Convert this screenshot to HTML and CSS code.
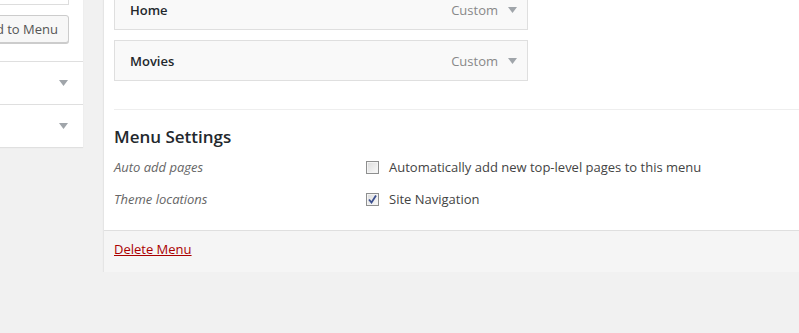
FILE: index.html
```html
<!DOCTYPE html>
<html>
<head>
  <title>Menus</title>
  <meta charset="UTF-8">
  <link rel="stylesheet" href="styles.css">
</head>
<body>
  <div class="nav-menus">
    <div class="menu-sidebar">
      <div class="add-section">
        <input type="text" class="search-field" value="">
        <div class="button-row">
          <button type="button" class="add-button">Add to Menu</button>
        </div>
      </div>
      <div class="accordion-row">
        <span class="accordion-title">Categories</span>
        <svg class="arrow" width="9" height="6" viewBox="0 0 9 6"><path d="M0 0h9L4.5 6z"/></svg>
      </div>
      <div class="accordion-row">
        <span class="accordion-title">Tags</span>
        <svg class="arrow" width="9" height="6" viewBox="0 0 9 6"><path d="M0 0h9L4.5 6z"/></svg>
      </div>
    </div>

    <div class="menu-edit">
      <div class="menu-body">
        <ul class="menu-items">
          <li class="menu-item">
            <span class="item-title">Home</span>
            <span class="item-type">Custom</span>
            <svg class="arrow" width="9" height="6" viewBox="0 0 9 6"><path d="M0 0h9L4.5 6z"/></svg>
          </li>
          <li class="menu-item">
            <span class="item-title">Movies</span>
            <span class="item-type">Custom</span>
            <svg class="arrow" width="9" height="6" viewBox="0 0 9 6"><path d="M0 0h9L4.5 6z"/></svg>
          </li>
        </ul>

        <div class="menu-settings">
          <h3>Menu Settings</h3>
          <div class="setting-row">
            <span class="setting-name">Auto add pages</span>
            <label class="setting-input">
              <span class="checkbox"></span>
              Automatically add new top-level pages to this menu
            </label>
          </div>
          <div class="setting-row">
            <span class="setting-name">Theme locations</span>
            <label class="setting-input">
              <span class="checkbox checked">
                <svg width="9" height="9" viewBox="0 0 9 9"><path d="M1 4.5l2.5 3L8 0.5" fill="none" stroke="#3b4f8f" stroke-width="1.8"/></svg>
              </span>
              Site Navigation
            </label>
          </div>
        </div>
      </div>

      <div class="menu-footer">
        <a href="#" class="delete-link">Delete Menu</a>
      </div>
    </div>
  </div>
</body>
</html>
```

FILE: styles.css
```css
body {
  margin: 0;
  background-color: #f1f1f1;
  font-family: "Open Sans", "Liberation Sans", sans-serif;
  font-size: 13px;
  color: #222222;
  overflow: hidden;
}

.nav-menus {
  display: flex;
  align-items: flex-start;
  gap: 20px;
}

/* left column */
.menu-sidebar {
  flex: none;
  width: 280px;
  margin-left: -197px;
  margin-top: -33px;
  background-color: #ffffff;
  box-shadow: 0 1px 1px rgba(0,0,0,0.07);
}

.add-section {
  padding: 10px 14px 18px 10px;
}

.search-field {
  display: block;
  width: 100%;
  height: 28px;
  box-sizing: border-box;
  border: 1px solid #dddddd;
  margin: 0;
}

.button-row {
  display: flex;
  justify-content: flex-end;
  margin-top: 10px;
}

.add-button {
  height: 28px;
  padding: 0 10px 1px;
  font-family: inherit;
  font-size: 13px;
  color: #555555;
  background-color: #f7f7f7;
  border: 1px solid #cccccc;
  border-radius: 3px;
  box-shadow: 0 1px 0 #cccccc;
}

.accordion-row {
  display: flex;
  justify-content: space-between;
  align-items: center;
  height: 42px;
  padding: 0 15px 0 10px;
  border-top: 1px solid #dfdfdf;
}

.accordion-title {
  font-weight: 600;
  visibility: hidden;
}

.arrow {
  fill: #a0a5aa;
  flex: none;
}

/* right column */
.menu-edit {
  flex: 1;
  background-color: #ffffff;
  border-left: 1px solid #e5e5e5;
  box-shadow: 0 1px 1px rgba(0,0,0,0.06);
  margin-top: -11px;
}

.menu-body {
  padding-left: 10px;
}

.menu-items {
  list-style: none;
  margin: 0;
  padding: 0;
  display: flex;
  flex-direction: column;
  gap: 10px;
}

.menu-item {
  display: flex;
  align-items: center;
  width: 414px;
  height: 41px;
  box-sizing: border-box;
  padding: 0 10px 0 15px;
  background-color: #f9f9f9;
  border: 1px solid #dfdfdf;
}

.item-title {
  flex: 1;
  font-weight: 600;
  color: #23282d;
}

.item-type {
  color: #888888;
  margin-right: 10px;
}

.menu-settings {
  margin-top: 28px;
  border-top: 1px solid #eeeeee;
  padding: 15px 0 15px;
}

.menu-settings h3 {
  margin: 0 0 2px;
  font-size: 17px;
  line-height: 24px;
  font-weight: 600;
  color: #23282d;
}

.setting-row {
  display: flex;
  align-items: center;
  height: 32px;
}

.setting-name {
  width: 252px;
  font-style: italic;
  color: #666666;
}

.setting-input {
  display: flex;
  align-items: center;
  gap: 10px;
  color: #444444;
}

.checkbox {
  display: flex;
  align-items: center;
  justify-content: center;
  width: 13px;
  height: 13px;
  box-sizing: border-box;
  border: 1px solid #8e8f8f;
  background: linear-gradient(135deg, #dcdcdc, #fafafa);
  box-shadow: inset 0 0 0 1px #f4f4f4;
}

.menu-footer {
  border-top: 1px solid #dfdfdf;
  background-color: #f5f5f5;
  padding: 8px 10px 13px;
  line-height: 20px;
}

.delete-link {
  color: #aa0000;
  text-decoration: underline;
}
```
